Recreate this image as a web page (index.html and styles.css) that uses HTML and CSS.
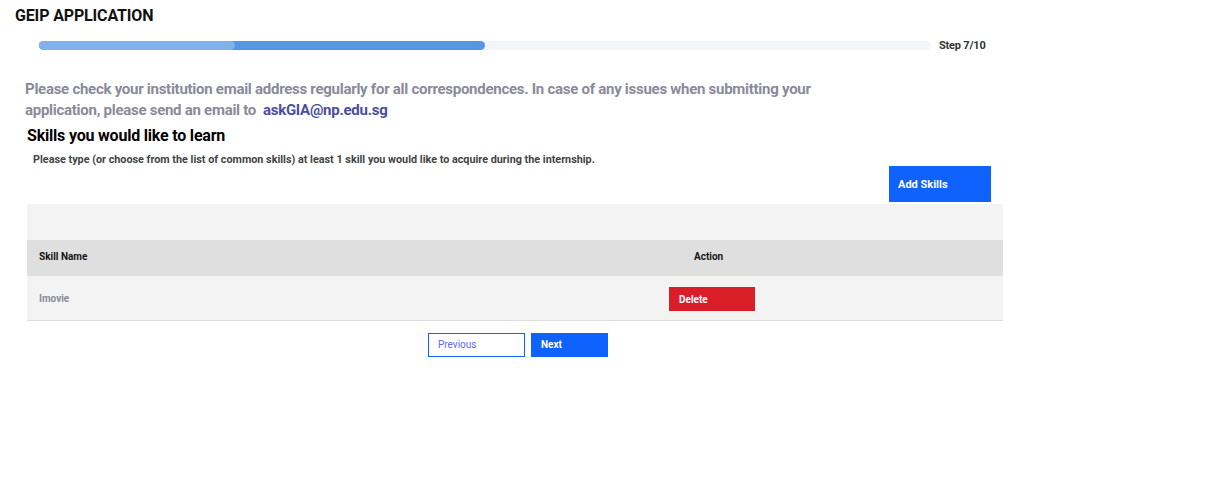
FILE: index.html
```html
<!DOCTYPE html>
<html>
<head>
<meta charset="utf-8">
<link rel="stylesheet" href="styles.css">
</head>
<body>
<div class="page">
  <h1 class="title">GEIP APPLICATION</h1>
  <div class="progress-row">
    <div class="track">
      <div class="fill-dark" style="width: 50%"></div>
      <div class="fill-light" style="width: 22%"></div>
    </div>
    <span class="step">Step 7/10</span>
  </div>
  <p class="notice">Please check your institution email address regularly for all correspondences. In case of any issues when submitting your application, please send an email to&nbsp; <a class="mail" href="#">askGIA@np.edu.sg</a></p>
  <div class="section">
    <h2 class="section-title">Skills you would like to learn</h2>
    <p class="hint">Please type (or choose from the list of common skills) at least 1 skill you would like to acquire during the internship.</p>
    <div class="add-row"><button class="btn-add">Add Skills</button></div>
    <div class="table">
      <div class="table-top"></div>
      <div class="row head">
        <div class="col-name">Skill Name</div>
        <div class="col-action">Action</div>
      </div>
      <div class="row body">
        <div class="col-name skill">Imovie</div>
        <div class="col-action"><button class="btn-delete">Delete</button></div>
      </div>
    </div>
    <div class="nav">
      <button class="btn-prev">Previous</button>
      <button class="btn-next">Next</button>
    </div>
  </div>
</div>
</body>
</html>
```
FILE: styles.css
```css
* { box-sizing: border-box; }
html, body { margin: 0; padding: 0; background: #fff; }
body { font-family: Roboto, "Liberation Sans", Arial, sans-serif; }
.page { padding: 6px 0 0 15px; }
.title { margin: 0; font-size: 16px; line-height: 19px; font-weight: 700; color: #111; letter-spacing: -0.15px; }
.progress-row { display: flex; align-items: center; margin: 14px 0 0 24px; width: 971px; }
.track { position: relative; width: 892px; height: 9px; background: #f2f6fb; border-radius: 5px; }
.fill-dark { position: absolute; left: 0; top: 0; height: 100%; background: #5596e6; border-radius: 5px; }
.fill-light { position: absolute; left: 0; top: 0; height: 100%; background: #82b1ea; border-radius: 5px; }
.step { margin-left: 8px; font-size: 11px; font-weight: 700; color: #333; letter-spacing: -0.2px; }
.notice { margin: 27px 0 0 10px; width: 800px; font-size: 15px; line-height: 21px; font-weight: 700; color: #8a8a99; letter-spacing: -0.27px; }
.mail { color: #4b4ea1; text-decoration: none; }
.section { margin: 5px 0 0 12px; width: 976px; }
.section-title { margin: 0; font-size: 16px; line-height: 20px; font-weight: 700; color: #000; letter-spacing: -0.2px; }
.hint { margin: 7px 0 0 6px; font-size: 10.8px; line-height: 13px; font-weight: 700; color: #444; }
.add-row { display: flex; justify-content: flex-end; padding-right: 12px; margin-top: 0; }
.btn-add { width: 102px; height: 36px; border: 0; background: #0f62fe; color: #fff; font-family: inherit; font-size: 11px; font-weight: 700; text-align: left; padding: 0 0 0 9px; }
.table { margin-top: 2px; border-bottom: 1px solid #ddd; }
.table-top { height: 36px; background: #f3f3f3; }
.row { display: flex; align-items: center; }
.row.head { height: 36px; padding-bottom: 3px; background: #dfdfdf; font-size: 10px; font-weight: 700; color: #161616; }
.row.body { height: 44px; background: #f3f3f3; }
.col-name { width: 642px; padding-left: 12px; }
.col-action { flex: 1; }
.head .col-action { padding-left: 25px; }
.skill { font-size: 10px; font-weight: 700; color: #8a8a99; }
.btn-delete { width: 86px; height: 24px; border: 0; margin-top: 2px; background: #da1e28; color: #fff; font-family: inherit; font-size: 10px; font-weight: 700; text-align: left; padding: 0 0 0 10px; }
.nav { display: flex; justify-content: center; gap: 6px; margin-top: 12px; padding-left: 6px; }
.btn-prev { width: 97px; height: 24px; border: 1px solid #0f62fe; background: #fff; color: #5a6cf0; font-family: inherit; font-size: 10px; text-align: left; padding: 0 0 2px 9px; }
.btn-next { width: 77px; height: 24px; border: 0; background: #0f62fe; color: #fff; font-family: inherit; font-size: 10px; font-weight: 700; text-align: left; padding: 0 0 2px 10px; }
```
